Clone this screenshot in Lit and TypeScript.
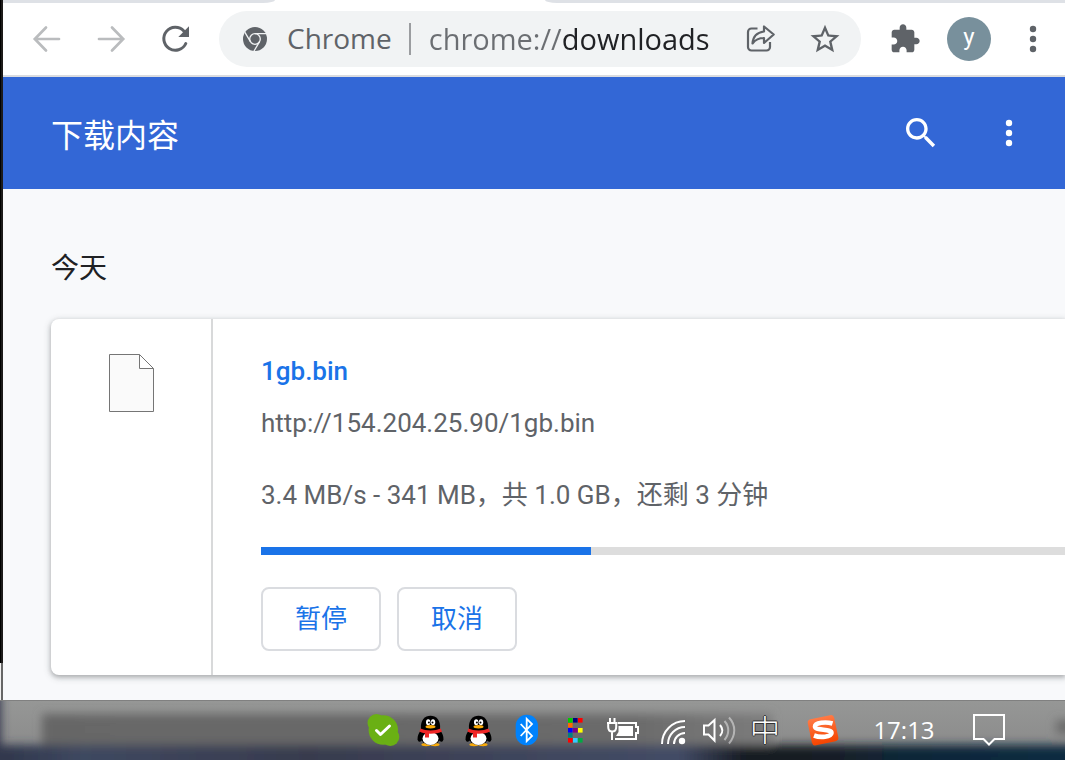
import { LitElement, html, css, svg } from "lit";
import { customElement, property } from "lit/decorators.js";

const penguin = svg`
  <ellipse cx="14" cy="36" rx="3" ry="6" transform="rotate(20 14 36)" fill="#000"/>
  <ellipse cx="33" cy="36" rx="3" ry="6" transform="rotate(-20 33 36)" fill="#000"/>
  <ellipse cx="19" cy="44.600" rx="4.600" ry="1.600" fill="#faab08"/>
  <ellipse cx="28" cy="44.600" rx="4.600" ry="1.600" fill="#faab08"/>
  <ellipse cx="23.500" cy="36" rx="10.500" ry="9" fill="#000"/>
  <ellipse cx="23.500" cy="38.500" rx="8" ry="6.500" fill="#fff"/>
  <path d="M14 29c-1-9 4-13.300 9.500-13.300S34 20 33 29c-4 3-15 3-19 0z" fill="#000"/>
  <ellipse cx="21.200" cy="22.300" rx="2.200" ry="3" fill="#fff"/>
  <ellipse cx="26" cy="22.300" rx="2.200" ry="3" fill="#fff"/>
  <circle cx="21.900" cy="22.500" r="1" fill="#000"/>
  <circle cx="25.500" cy="22.500" r="1" fill="#000"/>
  <ellipse cx="23.500" cy="26.800" rx="5" ry="1.700" fill="#faab08"/>
  <path d="M13.500 28.500c5 2.500 15 2.500 20 0l1.500 3c-5 3-18 3-22.500 0z" fill="#f02626"/>
  <path d="M18 32h4v5.500h-4z" fill="#f02626"/>`;

const cells: [number, number, string][] = [
  [0, 0, "#0c0"], [1, 0, "#000080"], [2, 0, "#f00"],
  [0, 1, "#f60"],
  [0, 2, "#00f"], [1, 2, "#800080"], [2, 2, "#ff0"],
  [0, 3, "#008080"],
  [0, 4, "#f00"], [1, 4, "#3cf"], [2, 4, "#0a4"],
];

const trayIcons = [
  {
    name: "Skype",
    art: svg`<g fill="#6ab014"><circle cx="24.300" cy="30" r="14.700"/><circle cx="17.500" cy="23" r="9"/><circle cx="31.300" cy="37" r="9"/></g>
      <path d="M17.500 30.500l4 4 9-8.500" fill="none" stroke="#fff" stroke-width="3" stroke-linecap="round" stroke-linejoin="round"/>`,
  },
  { name: "QQ", art: penguin },
  { name: "QQ", art: penguin },
  {
    name: "蓝牙",
    art: svg`<rect x="12.700" y="14.700" width="22.300" height="30.600" rx="11" fill="#0082fc"/>
      <path d="M17.700 24l11.300 12-5.300 5.200V18.800L29 24 17.700 36" fill="none" stroke="#fff" stroke-width="1.800"/>`,
  },
  {
    name: "E",
    art: cells.map(([c, r, fill]) => svg`<rect x=${17 + c * 5} y=${18 + r * 5} width="4.600" height="4.600" fill=${fill}/>`),
  },
  {
    name: "电源",
    art: svg`<path d="M19 23h18v4h2v6h-2v6H16" fill="none" stroke="#fff" stroke-width="2"/>
      <path d="M19.500 26H34v10H17l2.500-4z" fill="#fff"/>
      <path d="M11 18v4M15.500 18v4M8 23h10.500M9.200 23v4c0 3 1.800 4.500 4 4.500s4-1.500 4-4.500v-4M13 31v9" fill="none" stroke="#fff" stroke-width="2"/>`,
  },
  {
    name: "网络",
    art: svg`<g fill="none" stroke="#fff" stroke-width="2"><path d="M15 44a23 23 0 0 1 23-23M21 44a17 17 0 0 1 17-17M27 44a11 11 0 0 1 11-11"/></g><circle cx="35" cy="41" r="3.200" fill="#fff"/>`,
  },
  {
    name: "音量",
    art: svg`<g fill="none" stroke="#fff" stroke-width="2"><path d="M9 25.500h4.500l6-5.500v20.500l-6-6H9z"/><path d="M25 25c3 3.500 3 7.500 0 11"/>
      <g opacity=".45"><path d="M29.500 21c5 5.500 5 13 0 19M34 17.500c7 7.500 7 18 0 26"/></g></g>`,
  },
];

@customElement("kebab-icon")
class KebabIcon extends LitElement {
  static styles = css`
    :host { display: block; line-height: 0; }
    .dots { width: 40px; height: 40px; fill: currentColor; }
  `;
  render() {
    return html`<svg class="dots" viewBox="0 0 40 40" aria-hidden="true">
      <circle cx="20" cy="10" r="3.200"/><circle cx="20" cy="20" r="3.200"/><circle cx="20" cy="30" r="3.200"/>
    </svg>`;
  }
}

@customElement("browser-toolbar")
class BrowserToolbar extends LitElement {
  static styles = css`
    :host { display: block; background: #fff; border-bottom: 2px solid #dadce0; font-family: "Open Sans", "Noto Sans", sans-serif; }
    .tabs { display: flex; justify-content: space-between; height: 3px; background: #fff; }
    .tab { background: #dee1e6; }
    .tab-left { width: 272px; border-bottom-right-radius: 12px 3px; }
    .tab-right { flex: 1; margin-left: 270px; border-bottom-left-radius: 12px 3px; }
    .bar { display: flex; align-items: center; padding: 8px 0 8px 12px; }
    button { display: flex; align-items: center; justify-content: center; width: 64px; height: 56px; flex: none; padding: 0; border: 0; background: none; color: #5f6368; font: inherit; }
    button:disabled { color: #babcbe; }
    .icon { width: 32px; height: 32px; fill: none; stroke: currentColor; }
    .omnibox { display: flex; align-items: center; flex: 1; min-width: 0; height: 56px; margin: 0 12px; padding: 0 4px 0 24px; box-sizing: border-box; border-radius: 28px; background: #f1f3f4; color: #5f6368; }
    .omnibox .site { width: auto; gap: 20px; font-size: 28px; }
    .label { padding-bottom: 2px; }
    .logo { width: 24px; height: 24px; }
    .rule { width: 2px; height: 32px; margin: 0 18px 0 17px; background: #9b9da0; flex: none; }
    .address { flex: 1; min-width: 0; height: 40px; padding: 0 0 2px; border: 0; outline: 0; font: inherit; font-size: 29px; color: transparent; background: linear-gradient(90deg, #6b6e72 133px, #202124 133px); -webkit-background-clip: text; background-clip: text; }
    .avatar { width: 44px; height: 44px; border-radius: 50%; background: #78909c; color: #fff; font: 24px/40px Roboto, sans-serif; }
  `;
  render() {
    return html`
      <div class="tabs"><div class="tab tab-left"></div><div class="tab tab-right"></div></div>
      <div class="bar">
        <button disabled aria-label="后退"><svg class="icon" viewBox="0 0 32 32" stroke-width="2.700" stroke-linecap="round"><path d="M28 16H4.500M15 4.500L3.800 16 15 27.500"/></svg></button>
        <button disabled aria-label="前进"><svg class="icon" viewBox="0 0 32 32" stroke-width="2.700" stroke-linecap="round"><path d="M4 16h23.500M17 4.500L28.200 16 17 27.500"/></svg></button>
        <button aria-label="重新加载"><svg class="icon" viewBox="0 0 32 32" stroke-width="3" stroke-linecap="round"><path d="M26.800 20.500a11.500 11.500 0 1 1-2-12.500"/><path d="M30 3.300V14H19.300z" fill="currentColor" stroke="none"/></svg></button>
        <div class="omnibox">
          <button class="site">
            <svg class="logo" viewBox="0 0 24 24" aria-hidden="true">
              <circle cx="12" cy="12" r="12" fill="#5f6368"/>
              <g fill="none" stroke="#f1f3f4" stroke-width="1.300"><circle cx="12" cy="12" r="5.300"/><path d="M12 6.700h11M7.400 14.700L1.800 5.200M16.600 14.700L11 24"/></g>
            </svg><span class="label">Chrome</span>
          </button>
          <span class="rule"></span>
          <input class="address" aria-label="地址" .value=${"chrome://downloads"} />
          <button aria-label="分享"><svg class="icon" viewBox="0 0 32 32" stroke-width="2.200" stroke-linejoin="round"><path d="M12.500 5.500H6.500a3.500 3.500 0 0 0-3.500 3.500v15A3.500 3.500 0 0 0 6.500 27.500h15a3.500 3.500 0 0 0 3.500-3.500V19"/><path d="M19 3.500v5C11.500 9.500 8 13 7.500 20.500c3-4 6-5.500 11.500-5.500v5L28.700 11.500z"/></svg></button>
          <button aria-label="为此页添加书签"><svg class="icon" viewBox="0 0 32 32" fill="currentColor"><path stroke="none" fill="currentColor" fill-rule="evenodd" d="M30.500 12.300l-10.400-.9L16 1.800l-4.100 9.600-10.400.9 7.900 6.800L7 29.300l9-5.400 9 5.400-2.400-10.200zM16 21.300l-5.400 3.200 1.400-6.200-4.800-4.100 6.300-.6L16 7.800l2.500 5.800 6.300.6-4.800 4.100 1.400 6.200z"/></svg></button>
        </div>
        <button aria-label="扩展程序"><svg class="icon" viewBox="0 0 24 24"><path stroke="none" fill="currentColor" d="M20.500 11H19V7c0-1.100-.9-2-2-2h-4V3.500C13 2.120 11.880 1 10.500 1S8 2.120 8 3.500V5H4c-1.100 0-1.990.9-1.990 2v3.800H3.500c1.490 0 2.700 1.210 2.700 2.700s-1.210 2.700-2.700 2.700H2V20c0 1.100.9 2 2 2h3.800v-1.500c0-1.490 1.210-2.700 2.700-2.700 1.490 0 2.700 1.210 2.700 2.700V22H17c1.100 0 2-.9 2-2v-4h1.500c1.380 0 2.500-1.120 2.500-2.500S21.880 11 20.500 11z"/></svg></button>
        <button aria-label="个人资料"><span class="avatar">y</span></button>
        <button aria-label="菜单"><kebab-icon></kebab-icon></button>
      </div>`;
  }
}

@customElement("download-card")
class DownloadCard extends LitElement {
  @property() name = "";
  @property() url = "";
  @property() status = "";
  @property({ type: Number }) fraction = 0;

  static styles = css`
    :host { display: flex; background: #fff; border-radius: 8px 0 0 8px; box-shadow: 0 2px 4px rgba(60, 64, 67, .3), 0 2px 6px 2px rgba(60, 64, 67, .15); font: 26px/32px Roboto, "Noto Sans CJK SC", sans-serif; color: #5f6368; }
    .thumb { display: flex; justify-content: center; align-items: flex-start; width: 160px; flex: none; padding-top: 34px; border-right: 2px solid #d8d9da; }
    .file { width: 48px; height: 60px; }
    .body { flex: 1; min-width: 0; padding: 36px 0 24px 48px; }
    .name { display: block; width: max-content; font-weight: 500; color: #1a73e8; text-decoration: none; }
    .url { display: block; width: max-content; margin-top: 20px; color: inherit; text-decoration: none; }
    .status { margin-top: 40px; }
    .meter { display: block; width: 100%; height: 8px; margin-top: 36px; border: 0; appearance: none; -webkit-appearance: none; background: #ddd; }
    .meter::-webkit-progress-bar { background: #ddd; }
    .meter::-webkit-progress-value { background: #1a73e8; }
    .actions { display: flex; gap: 16px; margin-top: 32px; }
    .action { min-width: 120px; height: 64px; padding: 0 30px; border: 2px solid #dadce0; border-radius: 8px; background: #fff; color: #1a73e8; font: inherit; }
  `;
  render() {
    return html`
      <div class="thumb">
        <svg class="file" viewBox="0 0 48 60" aria-hidden="true"><path d="M2.500 1.500h30l14 14v43h-44z" fill="#fafafa" stroke="none"/><path d="M32.500 1.500v14h14z" fill="#fff"/><path d="M32.500 1.500h-30v57h44v-43h-14v-14l14 14" fill="none" stroke="#757575"/></svg>
      </div>
      <div class="body">
        <a class="name" href=${this.url}>${this.name}</a>
        <a class="url" href=${this.url}>${this.url}</a>
        <div class="status" id="status">${this.status}</div>
        <progress class="meter" aria-labelledby="status" max="1" .value=${this.fraction}></progress>
        <div class="actions"><button class="action">暂停</button><button class="action">取消</button></div>
      </div>`;
  }
}

@customElement("system-tray")
class SystemTray extends LitElement {
  static styles = css`
    :host { display: grid; height: 60px; overflow: hidden; color: #fff; font-family: "Open Sans", "Noto Sans CJK SC", sans-serif; }
    .glass, .items { grid-area: 1 / 1; }
    .glass { width: 100%; height: 60px; }
    .items { display: flex; justify-content: flex-end; align-items: center; padding-right: 40px; z-index: 1; }
    button { display: flex; align-items: center; justify-content: center; width: 48px; height: 60px; flex: none; padding: 0; border: 0; background: none; color: inherit; font: inherit; }
    .art { width: 100%; height: 60px; }
    .ime { padding: 0 4px 4px 0; font: 300 30px/56px "Noto Sans CJK SC", sans-serif; text-shadow: 1px 0 #333, -1px 0 #333, 0 1px #333, 0 -1px #333; }
    .sogou { width: 64px; }
    .clock { width: 98px; padding-bottom: 2px; font-size: 24px; }
    .notes { width: 72px; }
  `;
  render() {
    return html`
      <svg class="glass" viewBox="0 0 1065 60" preserveAspectRatio="none" aria-hidden="true">
        <defs>
          <linearGradient id="sheen" x2="0" y2="1"><stop offset="0" stop-color="#969796"/><stop offset="1" stop-color="#888"/></linearGradient>
          <linearGradient id="shade"><stop offset="0" stop-color="#666"/><stop offset=".8" stop-color="#6a6a6a"/><stop offset="1" stop-color="#7c7c7c"/></linearGradient>
          <linearGradient id="night"><stop offset="0" stop-color="#2a3044"/><stop offset=".1" stop-color="#3e4860"/><stop offset=".3" stop-color="#383b4e"/><stop offset=".63" stop-color="#434c66"/><stop offset=".69" stop-color="#161a22"/><stop offset=".76" stop-color="#181d25"/><stop offset=".83" stop-color="#0f2738"/><stop offset="1" stop-color="#102a42"/></linearGradient>
          <filter id="soft" filterUnits="userSpaceOnUse" x="-60" y="-40" width="1200" height="150"><feGaussianBlur stdDeviation="5"/></filter>
        </defs>
        <path d="M0 0h1065v60H0z" fill="url(#sheen)"/>
        <g filter="url(#soft)">
          <path d="M42 14h730v60H42z" fill="url(#shade)"/>
          <path d="M1056 20h40v14h-40z" fill="#6c6c6c"/>
          <path d="M-30 45h1125v40H-30z" fill="url(#night)"/>
          <path d="M-30-10H1v90h-31z" fill="#343850"/>
        </g>
        <path d="M0 0h1065v1H0z" fill="#808080"/>
      </svg>
      <div class="items">
        ${trayIcons.map((i) => html`<button aria-label=${i.name}><svg class="art" viewBox="0 0 48 60">${i.art}</svg></button>`)}
        <button class="ime">中</button>
        <button class="sogou" aria-label="搜狗输入法"><svg class="art" viewBox="0 0 64 60">
          <defs><linearGradient id="warm" x2="0" y2="1"><stop offset="0" stop-color="#ff7a45"/><stop offset="1" stop-color="#f54400"/></linearGradient></defs>
          <rect x="18.500" y="17" width="27" height="26.500" rx="3.500" fill="url(#warm)" transform="rotate(-12 32 30)"/>
          <path d="M41.500 23.500C35 21.500 24 22.500 24 26.500c0 4.500 17 2 16.500 6.500-.4 4-11 5-17.500 2.500" fill="none" stroke="#fff" stroke-width="4.600"/>
        </svg></button>
        <button class="clock">17:13</button>
        <button class="notes" aria-label="通知"><svg class="art" viewBox="0 0 72 60"><path d="M21 15h30v24H41.500L36 44.500 30.500 39H21z" fill="none" stroke="#fff" stroke-width="2"/></svg></button>
      </div>`;
  }
}

@customElement("app-root")
class AppRoot extends LitElement {
  static styles = css`
    :host { display: flex; flex-direction: column; min-height: 100vh; overflow: hidden; font-family: Roboto, "Noto Sans CJK SC", sans-serif; }
    .desktop { display: flex; flex: 1; }
    .edge { display: flex; flex-direction: column; width: 3px; flex: none; background: linear-gradient(90deg, #000 1px, #1c1a19 1px); }
    .edge::after { content: ""; height: 37px; margin-top: auto; background: linear-gradient(90deg, #f0f0f0 1px, #666 1px); }
    .window { flex: 1; min-width: 0; background: #f8f9fb; }
    .header { display: flex; align-items: center; height: 112px; padding: 0 12px 0 48px; background: #3367d6; color: #fff; }
    .title { flex: 1; margin: 0; padding-top: 6px; font-size: 32px; line-height: 48px; font-weight: 400; }
    .tool { display: flex; align-items: center; justify-content: center; width: 88px; height: 88px; padding: 0; border: 0; background: none; color: #fff; }
    .glass { width: 40px; height: 40px; fill: currentColor; }
    .list { padding: 64px 0 25px 48px; }
    .date { margin: 0 0 34px; font-size: 28px; line-height: 32px; font-weight: 400; color: #202124; }
  `;
  render() {
    return html`
      <div class="desktop">
        <div class="edge"></div>
        <div class="window">
          <browser-toolbar></browser-toolbar>
          <header class="header">
            <h1 class="title">下载内容</h1>
            <button class="tool" aria-label="搜索"><svg class="glass" viewBox="0 0 24 24"><path d="M15.500 14h-.79l-.28-.27C15.410 12.590 16 11.110 16 9.500 16 5.910 13.090 3 9.500 3S3 5.910 3 9.500 5.910 16 9.500 16c1.610 0 3.090-.59 4.230-1.570l.27.28v.79l5 4.990L20.490 19l-4.990-5zm-6 0C7.010 14 5 11.990 5 9.500S7.010 5 9.500 5 14 7.010 14 9.500 11.990 14 9.500 14z"/></svg></button>
            <button class="tool" aria-label="更多操作"><kebab-icon></kebab-icon></button>
          </header>
          <main class="list">
            <h2 class="date">今天</h2>
            <download-card name="1gb.bin" url="http://154.204.25.90/1gb.bin" status="3.4 MB/s - 341 MB，共 1.0 GB，还剩 3 分钟" .fraction=${0.41}></download-card>
          </main>
        </div>
      </div>
      <system-tray></system-tray>`;
  }
}
